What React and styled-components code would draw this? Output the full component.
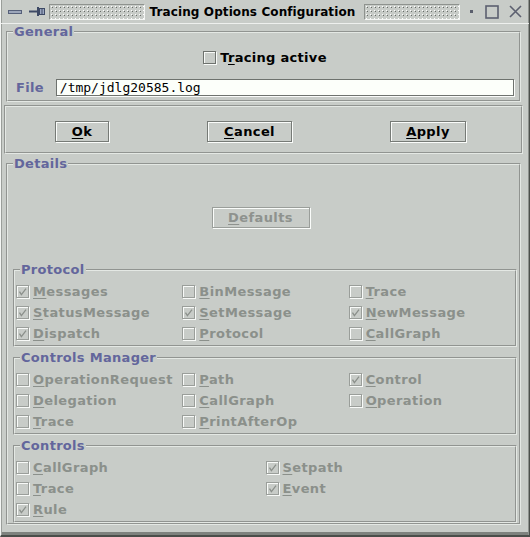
import React from "react";
import styled, { createGlobalStyle } from "styled-components";

const GlobalStyle = createGlobalStyle`
  * { box-sizing: border-box; }
  html, body { margin: 0; padding: 0; background: #c8ccc8; }
  body { font-family: "DejaVu Sans", sans-serif; }
`;

const Window = styled.div`
  width: 530px;
  height: 537px;
  background: #c8ccc8;
  display: flex;
  flex-direction: column;
  border-left: 1px solid #f4f6f4;
  border-right: 1px solid #4c504c;
  border-bottom: 2px solid #4a4e4a;
  box-shadow: inset 1px 0 0 #9a9e9a, inset -1px 0 0 #8e928e, inset 0 -3px 0 #7e827e;
  overflow: hidden;
`;

const TitleBar = styled.div`
  height: 24px;
  flex-shrink: 0;
  display: flex;
  align-items: center;
  padding: 0 7px 0 6px;
  border-bottom: 1px solid #eef0ee;
`;

const Bumps = styled.div`
  flex: 1;
  height: 16px;
  margin: ${p => p.$margin};
  border: 1px solid;
  border-color: #8e928e #f4f6f4 #f4f6f4 #8e928e;
  background-color: #c8ccc8;
  background-image:
    conic-gradient(from 0deg at 1px 1px, transparent 75%, #ffffff 0),
    conic-gradient(from 0deg at 1px 1px, transparent 75%, #686c68 0);
  background-size: 4px 4px;
  background-position: 1px 1px, 2px 2px;
`;

const Title = styled.div`
  font: bold 12px "DejaVu Sans", sans-serif;
  letter-spacing: 0.1px;
  color: #000;
  white-space: nowrap;
`;

const TitleIcon = styled.svg`
  display: block;
  flex-shrink: 0;
  margin: ${p => p.$margin || 0};
`;

const Body = styled.div`
  flex: 1;
  display: flex;
  flex-direction: column;
  padding: 1px 6px 0 3px;
`;

const Group = styled.fieldset`
  margin: ${p => p.$mt || 0}px ${p => (p.$inner ? 0 : 2)}px 0;
  padding: 0;
  min-width: 0;
  border: 2px groove #e4e8e4;
`;

const Legend = styled.legend`
  margin-left: 5px;
  padding: 0 1px;
  font: bold 13px/14px "DejaVu Sans", sans-serif;
  letter-spacing: 0.3px;
  color: #63669c;
`;

const GeneralContent = styled.div`
  display: flex;
  flex-direction: column;
  padding: 7px 5px 4px 8px;
`;

const CenterRow = styled.div`
  height: 22px;
  margin-bottom: 11px;
  display: flex;
  align-items: center;
  justify-content: center;
`;

const FileRow = styled.div`
  height: 17px;
  display: flex;
  align-items: center;
  gap: 12px;
`;

const FieldLabel = styled.span`
  font: bold 13px "DejaVu Sans", sans-serif;
  letter-spacing: 0.3px;
  color: #63669c;
`;

const TextField = styled.input`
  flex: 1;
  height: 17px;
  padding: 0 3px;
  border: 1px solid #6e726e;
  box-shadow: 1px 1px 0 #fafcfa;
  background: #fcfffa;
  font: 13px "DejaVu Sans Mono", monospace;
  color: #000;
  outline: none;
`;

const ButtonPanel = styled.div`
  height: 49px;
  margin-top: 3px;
  display: flex;
  align-items: center;
  justify-content: space-between;
  padding: 0 55px 0 49px;
  border: 2px groove #e4e8e4;
`;

const Button = styled.button`
  width: ${p => p.$w}px;
  height: 21px;
  margin-top: 4px;
  padding: 0;
  background: #c8ccc8;
  border: 1px solid ${p => (p.disabled ? "#9a9e9a" : "#767a76")};
  box-shadow: 1px 1px 0 #fafcfa, inset 1px 1px 0 #fafcfa;
  font: bold 13px "DejaVu Sans", sans-serif;
  letter-spacing: 0.4px;
  color: ${p => (p.disabled ? "#8e928e" : "#000")};
  &:disabled { color: #8e928e; }
`;

const DetailsContent = styled.div`
  padding: 0 2px 0 5px;
`;

const DefaultsRow = styled.div`
  height: 92px;
  display: flex;
  align-items: center;
  justify-content: center;
  padding: 0 9px 4px 0;
`;

const OptionGrid = styled.div`
  display: grid;
  grid-template-columns: repeat(${p => p.$cols}, 1fr);
  grid-auto-rows: 21px;
  padding: 4px 0 1px 1px;
`;

const OptionLabel = styled.label`
  display: flex;
  align-items: center;
  gap: 4px;
  white-space: nowrap;
  font: bold 13px "DejaVu Sans", sans-serif;
  letter-spacing: ${p => (p.$disabled ? "0.4px" : "0.3px")};
  color: ${p => (p.$disabled ? "#8b908b" : "#000")};
`;

const Box = styled.span`
  width: 13px;
  height: 13px;
  flex-shrink: 0;
  display: flex;
  align-items: center;
  justify-content: center;
  border: 1px solid ${p => (p.$disabled ? "#9a9e9a" : "#6e726e")};
  box-shadow: 1px 1px 0 #f8faf8, inset 1px 1px 0 #f8faf8;
`;

const Under = styled.u`
  text-decoration-thickness: 1px;
  text-underline-offset: 2px;
`;

const Mnemonic = ({ text, at = 0 }) => (
  <span>
    {text.slice(0, at)}
    <Under>{text[at]}</Under>
    {text.slice(at + 1)}
  </span>
);

const CheckMark = ({ color }) => (
  <svg width="11" height="11" viewBox="0 0 11 11" style={{ display: "block" }}>
    <path d="M2.5 5.6 L4.4 8.6 L9 2.6" fill="none" stroke={color} strokeWidth="1.3" />
  </svg>
);

const Option = ({ label, checked, disabled = true, at = 0 }) => (
  <OptionLabel $disabled={disabled}>
    <Box $disabled={disabled}>{checked && <CheckMark color={disabled ? "#8b908b" : "#333"} />}</Box>
    <Mnemonic text={label} at={at} />
  </OptionLabel>
);

const protocol = [
  { label: "Messages", checked: true },
  { label: "BinMessage" },
  { label: "Trace" },
  { label: "StatusMessage", checked: true },
  { label: "SetMessage", checked: true },
  { label: "NewMessage", checked: true },
  { label: "Dispatch", checked: true },
  { label: "Protocol" },
  { label: "CallGraph" },
];

const manager = [
  { label: "OperationRequest" },
  { label: "Path" },
  { label: "Control", checked: true },
  { label: "Delegation" },
  { label: "CallGraph" },
  { label: "Operation" },
  { label: "Trace" },
  { label: "PrintAfterOp" },
];

const controls = [
  { label: "CallGraph" },
  { label: "Setpath", checked: true },
  { label: "Trace" },
  { label: "Event", checked: true },
  { label: "Rule", checked: true },
];

const OptionGroup = ({ title, items, cols, mt }) => (
  <Group $inner $mt={mt}>
    <Legend>{title}</Legend>
    <OptionGrid $cols={cols}>
      {items.map((it, i) => (
        <Option key={i} label={it.label} checked={it.checked} />
      ))}
    </OptionGrid>
  </Group>
);

const App = () => {
  return (
    <>
      <GlobalStyle />
      <Window>
        <TitleBar>
          <TitleIcon width="14" height="4" viewBox="0 0 14 4" $margin="0 7px 0 1px">
            <rect x="0.5" y="0.5" width="13" height="3" fill="#9ca6ba" stroke="#56607a" />
          </TitleIcon>
          <TitleIcon width="16" height="11" viewBox="0 0 16 11">
            <line x1="0" y1="5.5" x2="8" y2="5.5" stroke="#3e4a66" strokeWidth="2" />
            <rect x="8" y="1" width="2" height="9" fill="#3e4a66" />
            <rect x="10.5" y="2.5" width="5" height="6" fill="#9aa6c0" stroke="#3e4a66" />
            <line x1="13" y1="2.5" x2="13" y2="8.5" stroke="#3e4a66" />
          </TitleIcon>
          <Bumps $margin="0 5px 0 4px" />
          <Title>Tracing Options Configuration</Title>
          <Bumps $margin="0 10px 0 9px" />
          <TitleIcon width="3" height="3" viewBox="0 0 3 3" $margin="0 12px 0 0">
            <rect width="3" height="3" fill="#5a5e6c" />
          </TitleIcon>
          <TitleIcon width="14" height="14" viewBox="0 0 14 14" $margin="0 10px 0 0">
            <rect x="1" y="1" width="12" height="12" fill="none" stroke="#5c6070" strokeWidth="1.6" />
          </TitleIcon>
          <TitleIcon width="13" height="13" viewBox="0 0 13 13">
            <path d="M1 1 L12 12 M12 1 L1 12" stroke="#5c6070" strokeWidth="1.6" />
          </TitleIcon>
        </TitleBar>

        <Body>
          <Group>
            <Legend>General</Legend>
            <GeneralContent>
              <CenterRow>
                <Option label="Tracing active" at={1} disabled={false} />
              </CenterRow>
              <FileRow>
                <FieldLabel>File</FieldLabel>
                <TextField readOnly value="/tmp/jdlg20585.log" />
              </FileRow>
            </GeneralContent>
          </Group>

          <ButtonPanel>
            <Button $w={54}><Mnemonic text="Ok" /></Button>
            <Button $w={85}><Mnemonic text="Cancel" /></Button>
            <Button $w={76}><Mnemonic text="Apply" /></Button>
          </ButtonPanel>

          <Group $mt={3}>
            <Legend>Details</Legend>
            <DetailsContent>
              <DefaultsRow>
                <Button $w={98} disabled><Mnemonic text="Defaults" /></Button>
              </DefaultsRow>
              <OptionGroup title="Protocol" items={protocol} cols={3} />
              <OptionGroup title="Controls Manager" items={manager} cols={3} mt={4} />
              <OptionGroup title="Controls" items={controls} cols={2} mt={4} />
            </DetailsContent>
          </Group>
        </Body>
      </Window>
    </>
  );
};

export default App;
